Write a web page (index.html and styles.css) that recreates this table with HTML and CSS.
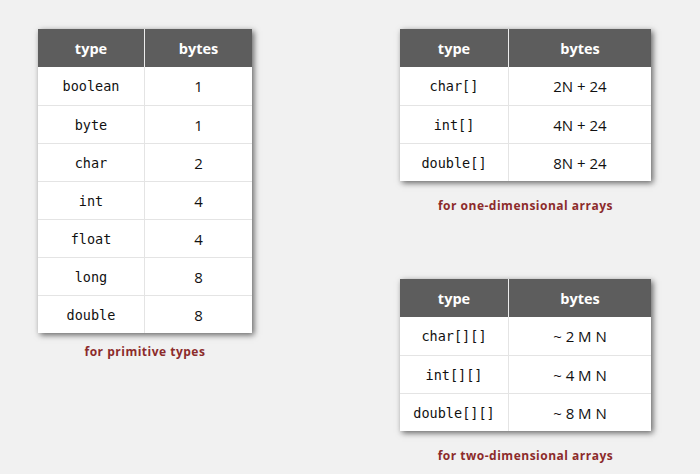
FILE: index.html
```html
<!DOCTYPE html>
<html>
<head>
<meta charset="utf-8">
<link rel="stylesheet" href="styles.css">
</head>
<body>
<div class="page">
  <div class="col left">
    <figure class="fig">
      <table class="tbl t1">
        <thead><tr><th>type</th><th>bytes</th></tr></thead>
        <tbody>
          <tr><td class="code">boolean</td><td class="num purple">1</td></tr>
          <tr><td class="code">byte</td><td class="num">1</td></tr>
          <tr><td class="code">char</td><td class="num">2</td></tr>
          <tr><td class="code">int</td><td class="num">4</td></tr>
          <tr><td class="code">float</td><td class="num">4</td></tr>
          <tr><td class="code">long</td><td class="num">8</td></tr>
          <tr><td class="code">double</td><td class="num">8</td></tr>
        </tbody>
      </table>
      <figcaption class="cap">for primitive types</figcaption>
    </figure>
  </div>
  <div class="col right">
    <figure class="fig">
      <table class="tbl t2">
        <thead><tr><th>type</th><th>bytes</th></tr></thead>
        <tbody>
          <tr><td class="code">char[]</td><td class="num">2N + 24</td></tr>
          <tr><td class="code">int[]</td><td class="num">4N + 24</td></tr>
          <tr><td class="code">double[]</td><td class="num">8N + 24</td></tr>
        </tbody>
      </table>
      <figcaption class="cap">for one-dimensional arrays</figcaption>
    </figure>
    <figure class="fig second">
      <table class="tbl t2">
        <thead><tr><th>type</th><th>bytes</th></tr></thead>
        <tbody>
          <tr><td class="code">char[][]</td><td class="num">~ 2 M N</td></tr>
          <tr><td class="code">int[][]</td><td class="num">~ 4 M N</td></tr>
          <tr><td class="code">double[][]</td><td class="num">~ 8 M N</td></tr>
        </tbody>
      </table>
      <figcaption class="cap">for two-dimensional arrays</figcaption>
    </figure>
  </div>
</div>
</body>
</html>
```
FILE: styles.css
```css
html, body {
  margin: 0;
  padding: 0;
  background: #f1f1f1;
}
.page {
  display: flex;
  padding: 29px 0 0 38px;
  gap: 148px;
  width: 700px;
  height: 474px;
  box-sizing: border-box;
}
.col {
  display: flex;
  flex-direction: column;
}
.fig {
  margin: 0;
  display: flex;
  flex-direction: column;
  align-items: center;
}
.fig.second {
  margin-top: 65px;
}
.tbl {
  border-collapse: collapse;
  background: #fff;
  box-shadow: 2px 2px 6px rgba(0, 0, 0, 0.6);
}
.t1 { width: 214px; }
.t1 th:first-child, .t1 td:first-child { width: 106px; }
.t2 { width: 251px; }
.t2 th:first-child, .t2 td:first-child { width: 108px; }
.tbl th {
  background: #5d5d5d;
  color: #fff;
  font-family: "Open Sans", sans-serif;
  font-weight: bold;
  font-size: 14.5px;
  height: 38px;
  padding: 0;
  text-align: center;
  border-left: 1px solid #ececec;
}
.tbl th:first-child { border-left: none; }
.tbl td {
  height: 37px;
  padding: 0;
  text-align: center;
  border-top: 1px solid #e4e4e4;
  border-left: 1px solid #e4e4e4;
  color: #111;
}
.tbl tbody tr:first-child td { border-top: none; height: 38px; }
.tbl td:first-child { border-left: none; }
.code {
  font-family: "DejaVu Sans Mono", monospace;
  font-size: 13.5px;
}
.num {
  font-family: "Open Sans", sans-serif;
  font-size: 15px;
}
.purple { color: #7a2a6a; }
.cap {
  margin-top: 10px;
  font-family: "Open Sans", sans-serif;
  font-weight: bold;
  font-size: 12px;
  letter-spacing: 0.5px;
  color: #8c2b2b;
}
.right .cap {
  margin-top: 16px;
}
```
